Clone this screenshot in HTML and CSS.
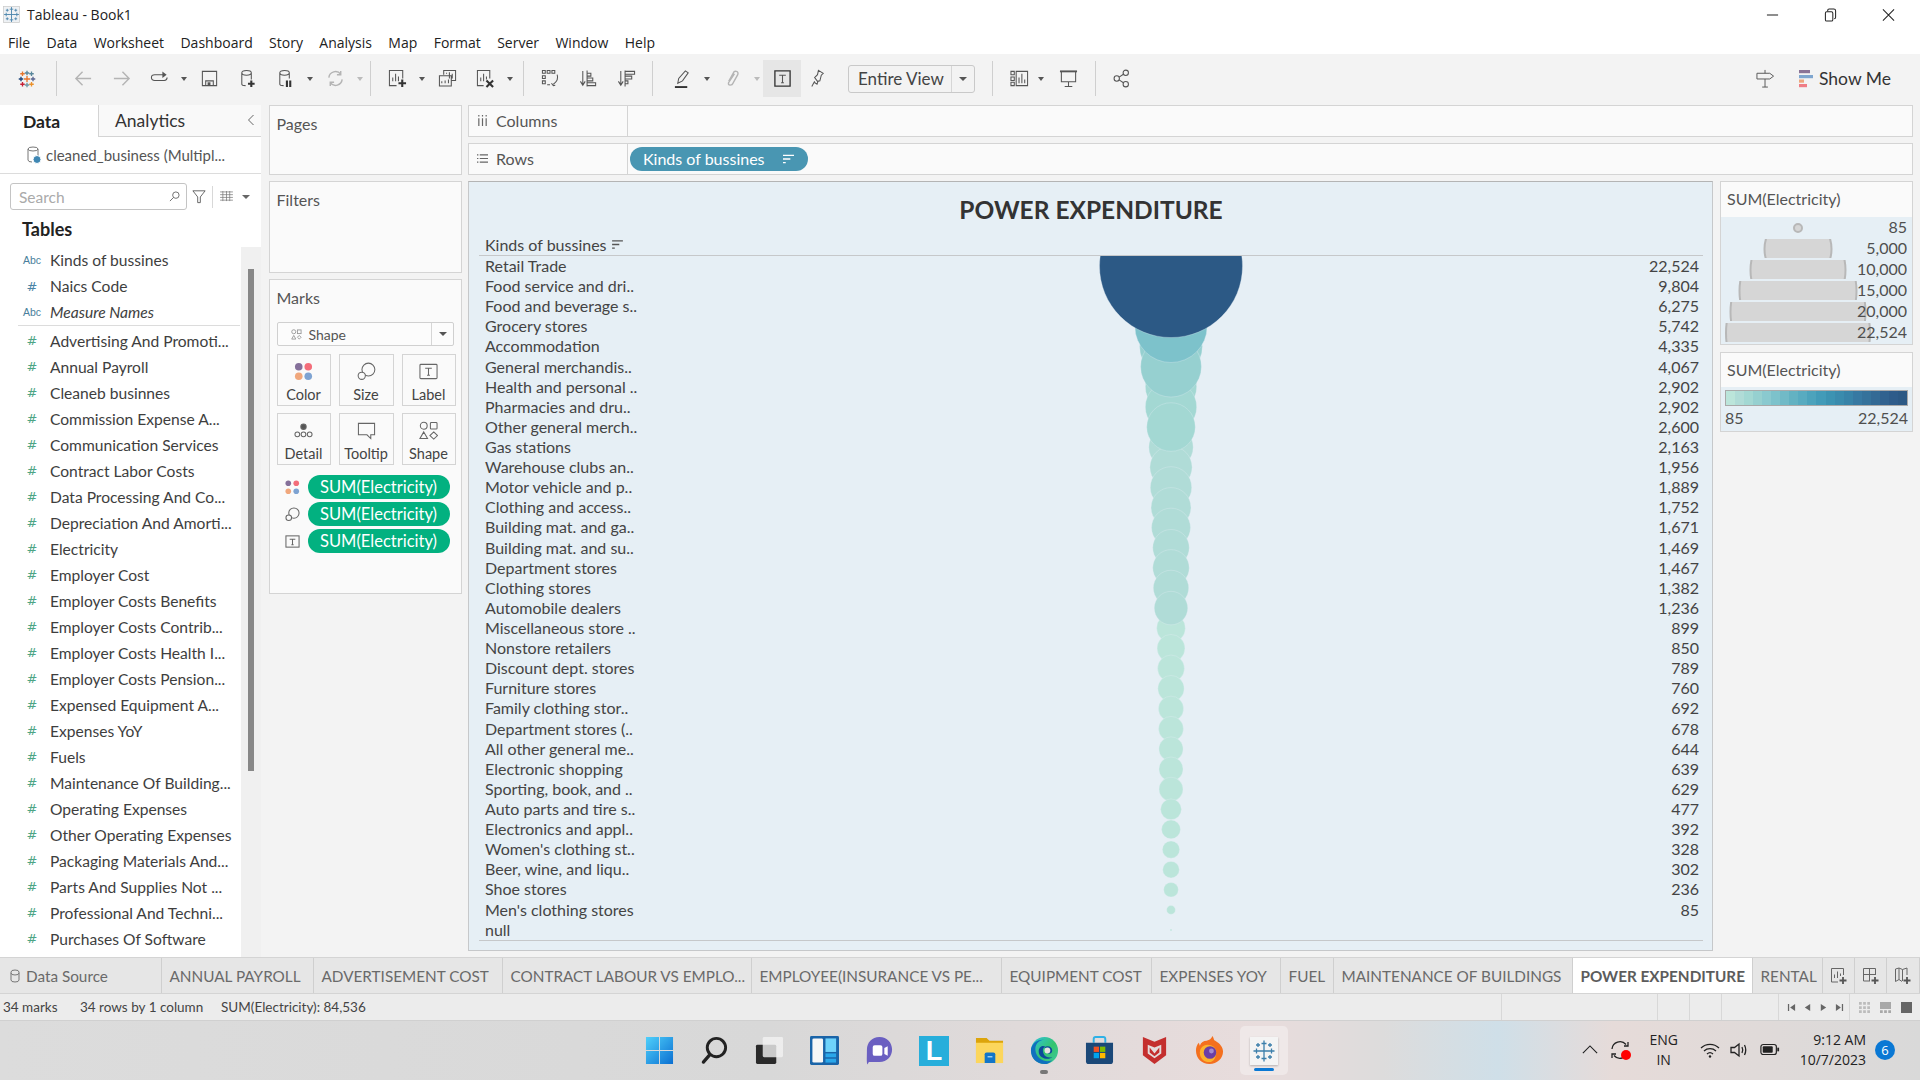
FILE: index.html
```html
<!DOCTYPE html>
<html lang="en">
<head>
    <meta charset="UTF-8">
    <title>Tableau - Book1</title>
    <link rel="stylesheet" href="styles.css">
</head>
<body>
    <svg class="defs" width="0" height="0">
        <symbol id="tab-cross" viewBox="0 0 24 24">
            <path d="M12 7v10M7 12h10M12 1.500v6M9.500 4.500h5M12 16.500v6M9.500 19.500h5M1.500 12h6M4.500 9.500v5M16.500 12h6M19.500 9.500v5M6 4v4M4 6h4M18 4v4M16 6h4M6 16v4M4 18h4M18 16v4M16 18h4"/>
        </symbol>
    </svg>

    <div class="titlebar">
        <div class="app-title">
            <svg class="app-icon" viewBox="0 0 24 24"><rect x="0.500" y="0.500" width="23" height="23" fill="#eef1f4" stroke="#c9c9c9"/><use href="#tab-cross" fill="none" stroke="#4c86ad" stroke-width="1.300"/></svg>
            <span>Tableau - Book1</span>
        </div>
        <div class="win-controls">
            <svg viewBox="0 0 14 14"><path d="M1 7h12"/></svg>
            <svg viewBox="0 0 14 14"><rect x="1.500" y="3.500" width="8" height="10" rx="1.500"/><path d="M4 3V2q0-1.500 1.500-1.500h5q2 0 2 2v7q0 1.500-1.500 1.500"/></svg>
            <svg viewBox="0 0 14 14"><path d="M1 1l12 12M13 1L1 13"/></svg>
        </div>
    </div>

    <div class="menubar">
        <span>File</span><span>Data</span><span>Worksheet</span><span>Dashboard</span><span>Story</span><span>Analysis</span><span>Map</span><span>Format</span><span>Server</span><span>Window</span><span>Help</span>
    </div>

    <div class="toolbar">
        <div class="tb-btn tb-logo"><svg viewBox="0 0 24 24" class="logo-mark">
            <path stroke="#e8762b" d="M6 2v6M3 5h6"/><path stroke="#5b879b" d="M12 1v6M9 4h6"/><path stroke="#59879b" d="M18 2v6M15 5h6"/><path stroke="#1f447a" d="M1 12h6M4 9v6"/><path stroke="#e8762b" d="M12 8v8M8 12h8"/><path stroke="#5b6591" d="M17 12h6M20 9v6"/><path stroke="#c72035" d="M6 16v6M3 19h6"/><path stroke="#7099a6" d="M12 17v6M9 20h6"/><path stroke="#eb912b" d="M18 16v6M15 19h6"/>
        </svg></div>
        <i class="tb-div"></i>
        <div class="tb-group">
            <div class="tb-btn off"><svg viewBox="0 0 20 20"><path d="M18 10H3M9 3l-7 7 7 7"/></svg></div>
            <div class="tb-btn off"><svg viewBox="0 0 20 20"><path d="M2 10h15M11 3l7 7-7 7"/></svg></div>
            <div class="tb-btn"><svg viewBox="0 0 20 20"><path d="M16 6H5q-3.500 0-3.500 3t3.500 3h10q3 0 3-3"/><path class="solid" d="M13 2.500l4.500 3.500-4.500 3.500z"/></svg></div><i class="tb-arrow"></i>
            <div class="tb-btn"><svg viewBox="0 0 20 20"><path d="M2.500 2.500h15v15h-15zM6 17.500v-5h8v5"/><path class="solid" d="M8 14h3v3H8z"/></svg></div>
            <div class="tb-btn"><svg viewBox="0 0 20 20"><path d="M4 4q0-2.500 5-2.500T14 4v7M4 4v12q0 1.500 4 1.500M4 4q0 2.500 5 2.500T14 4"/><path class="bold" d="M14 12v7M10.500 15.500h7"/></svg></div>
            <div class="tb-btn"><svg viewBox="0 0 20 20"><path d="M4 4q0-2.500 5-2.500T14 4v6M4 4v12q0 1.500 4 1.500M4 4q0 2.500 5 2.500T14 4"/><path class="bold" d="M11.500 12v7M15 12v7"/></svg></div><i class="tb-arrow"></i>
            <div class="tb-btn off"><svg viewBox="0 0 20 20"><path d="M3 9a7 7 0 0 1 12.500-3.500M17 11a7 7 0 0 1-12.500 3.500M15.500 2v4h-4M4.500 18v-4h4"/></svg></div><i class="tb-arrow off pull"></i>
        </div>
        <i class="tb-div"></i>
        <div class="tb-group">
            <div class="tb-btn"><svg viewBox="0 0 20 20"><path d="M9 17.500H1.500v-16h14V10M5 13V9M8 13V5M11 13V8"/><path class="bold" d="M15 11v8M11 15h8"/></svg></div><i class="tb-arrow"></i>
            <div class="tb-btn"><svg viewBox="0 0 20 20"><path d="M6 6V1.500h12.500V12H14M1.500 7H14v11H1.500zM9 5V4M12 10V3.500M15 10V5M4 15v-2M7.500 15v-3M11 15v-4"/></svg></div>
            <div class="tb-btn"><svg viewBox="0 0 20 20"><path d="M8 17.500H1.500v-16h13V10M5 13V9M8 13V5M11 11V8"/><path class="bold" d="M11 12l7 7M18 12l-7 7"/></svg></div><i class="tb-arrow"></i>
        </div>
        <i class="tb-div"></i>
        <div class="tb-group">
            <div class="tb-btn"><svg viewBox="0 0 20 20"><path d="M1.500 1.500h3v3h-3zM6.500 1.500h3v3h-3zM11.500 1.500h3v3h-3zM1.500 7h3v3h-3zM1.500 12.500h3v3h-3zM6.500 16.500h3M17 6q2 6-4 10M11 15l2 2.500 2-.5"/></svg></div>
            <div class="tb-btn"><svg viewBox="0 0 20 20"><path d="M4 2v14M1.500 13L4 17l2.500-4M8.500 1.500v17M8.500 4.500h4v3h-4zM8.500 9.500h6v3h-6zM8.500 14.500h9v3h-9z"/></svg></div>
            <div class="tb-btn"><svg viewBox="0 0 20 20"><path d="M4 2v14M1.500 13L4 17l2.500-4M8.500 1.500v17M8.500 2.500h10v3h-10zM8.500 7.500h7v3h-7zM8.500 12.500h3v3h-3z"/></svg></div>
        </div>
        <i class="tb-div"></i>
        <div class="tb-group push">
            <div class="tb-btn"><svg viewBox="0 0 20 20"><path d="M5 15l1-5 7-8 3 2-6 8.500zM5 15l5-2.500"/><path class="bold thick" d="M2 19h13"/></svg></div><i class="tb-arrow"></i>
            <div class="tb-btn off"><svg viewBox="0 0 20 20"><path d="M12 5l-6 9q-1 3 1.500 3t3-2l5-9q1-3-1.500-3.500t-3 1.500l-5 9"/></svg></div><i class="tb-arrow off"></i>
            <div class="tb-btn active"><svg viewBox="0 0 20 20"><path class="box" d="M2 2h16v16H2z"/><path d="M6.500 6.500h7M10 6.500v8M8.500 14.500h3"/></svg></div>
            <div class="tb-btn pin"><svg viewBox="0 0 20 20"><path d="M11 1.500l5 3-2 2-1.500 6-2.500.5-3-4 3-3zM7 13l-3 5.500M10.500 13l-1 3-3-2"/></svg></div>
        </div>
        <div class="view-select"><span>Entire View</span><b></b></div>
        <i class="tb-div"></i>
        <div class="tb-group">
            <div class="tb-btn"><svg viewBox="0 0 20 20"><path d="M1 2.500h3.500v3.500H1zM1 8.500h3.500v3.500H1zM1 14h3.500v3.500H1zM6.500 2.500h12v15h-12zM9.500 15V9M12.500 15V5M15.500 15v-4"/></svg></div><i class="tb-arrow tight"></i>
            <div class="tb-btn"><svg viewBox="0 0 20 20"><path class="thick" d="M1 2.500h18"/><path d="M2.500 3v10.500h15V3M10 13.500v5M6 18.500h8"/></svg></div>
        </div>
        <i class="tb-div"></i>
        <div class="tb-btn"><svg viewBox="0 0 20 20"><circle cx="14.500" cy="4" r="2.800"/><circle cx="14.500" cy="16" r="2.800"/><circle cx="5" cy="10" r="2.800"/><path d="M7.500 8.500l4.500-3M7.500 11.500l4.500 3"/></svg></div>
        <div class="tb-right">
            <svg class="sign" viewBox="0 0 20 20"><path d="M1 4.500h13.500l4 3-4 3H1zM9.500 1v3.500M9.500 10.500V19M6.500 19h6"/></svg>
            <div class="show-me">
                <svg viewBox="0 0 14 18"><rect width="11" height="3.200" fill="#8a7396"/><rect y="5" width="14" height="3.200" fill="#7fa6cf"/><rect y="9.500" width="5" height="3.200" fill="#eda67c"/><rect y="14" width="8" height="3.200" fill="#ef7d85"/></svg>
                <span>Show Me</span>
            </div>
        </div>
    </div>

    <div class="workspace">
        <div class="data-pane">
            <div class="pane-tabs">
                <div class="pane-tab current">Data</div>
                <div class="pane-tab">Analytics<svg class="collapse" viewBox="0 0 8 12"><path d="M6.500 1L1.500 6l5 5"/></svg></div>
            </div>
            <div class="source">
                <svg viewBox="0 0 14 18"><path d="M1 3q0-2 5-2t5 2v7M1 3v11q0 2 4 2M1 3q0 2 5 2t5-2"/><circle class="tick" cx="10" cy="13.500" r="4"/></svg>
                <span>cleaned_business (Multipl...</span>
            </div>
            <div class="search-row">
                <div class="search"><span>Search</span><svg viewBox="0 0 12 12"><circle cx="7.500" cy="4.500" r="3.500"/><path d="M5 7l-4 4"/></svg></div>
                <svg class="funnel" viewBox="0 0 16 16"><path d="M1 1.500h14L9.500 8.500v6.500h-3V8.500z"/></svg>
                <i class="search-div"></i>
                <svg class="list-ico" viewBox="0 0 14 12"><path d="M0 1h14M0 4h14M0 7h14M0 10h14M3 0v11M7 0v11M10.500 0v11"/></svg>
                <i class="caret"></i>
            </div>
            <div class="tables-title">Tables</div>
            <div class="field-wrap">
                <div class="fields">
                    <div class="field"><em class="abc">Abc</em><span>Kinds of bussines</span></div>
                    <div class="field"><em class="dim">#</em><span>Naics Code</span></div>
                    <div class="field names"><em class="abc">Abc</em><span>Measure Names</span></div>
                    <div class="field-sep"></div>
                    <div class="field"><em>#</em><span>Advertising And Promoti...</span></div>
                    <div class="field"><em>#</em><span>Annual Payroll</span></div>
                    <div class="field"><em>#</em><span>Cleaneb businnes</span></div>
                    <div class="field"><em>#</em><span>Commission Expense A...</span></div>
                    <div class="field"><em>#</em><span>Communication Services</span></div>
                    <div class="field"><em>#</em><span>Contract Labor Costs</span></div>
                    <div class="field"><em>#</em><span>Data Processing And Co...</span></div>
                    <div class="field"><em>#</em><span>Depreciation And Amorti...</span></div>
                    <div class="field"><em>#</em><span>Electricity</span></div>
                    <div class="field"><em>#</em><span>Employer Cost</span></div>
                    <div class="field"><em>#</em><span>Employer Costs Benefits</span></div>
                    <div class="field"><em>#</em><span>Employer Costs Contrib...</span></div>
                    <div class="field"><em>#</em><span>Employer Costs Health I...</span></div>
                    <div class="field"><em>#</em><span>Employer Costs Pension...</span></div>
                    <div class="field"><em>#</em><span>Expensed Equipment A...</span></div>
                    <div class="field"><em>#</em><span>Expenses YoY</span></div>
                    <div class="field"><em>#</em><span>Fuels</span></div>
                    <div class="field"><em>#</em><span>Maintenance Of Building...</span></div>
                    <div class="field"><em>#</em><span>Operating Expenses</span></div>
                    <div class="field"><em>#</em><span>Other Operating Expenses</span></div>
                    <div class="field"><em>#</em><span>Packaging Materials And...</span></div>
                    <div class="field"><em>#</em><span>Parts And Supplies Not ...</span></div>
                    <div class="field"><em>#</em><span>Professional And Techni...</span></div>
                    <div class="field"><em>#</em><span>Purchases Of Software</span></div>
                </div>
                <div class="scroll-track"><div class="scroll-thumb"></div></div>
            </div>
        </div>

        <div class="cards">
            <div class="card pages">Pages</div>
            <div class="card filters">Filters</div>
            <div class="card marks">
                <div>Marks</div>
                <div class="mark-select">
                    <svg viewBox="0 0 12 12"><circle cx="3" cy="3" r="2.200"/><rect x="7" y="1" width="4" height="4"/><path d="M3 7l2.200 4H.8zM9 7l2 2-2 2-2-2z"/></svg>
                    <span>Shape</span><b></b>
                </div>
                <div class="mark-grid">
                    <div class="mark-btn">
                        <svg viewBox="0 0 20 20"><circle cx="5" cy="5" r="4" fill="#85709a"/><circle cx="15" cy="5" r="4" fill="#f36d7a"/><circle cx="5" cy="15" r="4" fill="#f0a77c"/><circle cx="15" cy="15" r="4" fill="#7ea3d2"/></svg>
                        <span>Color</span>
                    </div>
                    <div class="mark-btn">
                        <svg class="ln" viewBox="0 0 20 20"><circle cx="12" cy="8" r="6.800"/><circle cx="5" cy="14.500" r="3.800" fill="#fafafa"/></svg>
                        <span>Size</span>
                    </div>
                    <div class="mark-btn">
                        <svg class="ln" viewBox="0 0 20 20"><rect x="1" y="2.500" width="18" height="15" rx="1"/><path d="M6.500 6.500h7M10 6.500v7.500M8.500 14h3"/></svg>
                        <span>Label</span>
                    </div>
                    <div class="mark-btn">
                        <svg class="ln" viewBox="0 0 20 20"><circle cx="10" cy="6" r="2.800" fill="#555"/><circle cx="3.500" cy="14" r="2.500"/><circle cx="10" cy="14" r="2.500"/><circle cx="16.500" cy="14" r="2.500"/></svg>
                        <span>Detail</span>
                    </div>
                    <div class="mark-btn">
                        <svg class="ln" viewBox="0 0 20 20"><path d="M1.500 2.500h17v12h-4v4l-4-4h-9z"/></svg>
                        <span>Tooltip</span>
                    </div>
                    <div class="mark-btn">
                        <svg class="ln" viewBox="0 0 20 20"><circle cx="5" cy="5" r="3.600"/><rect x="12" y="1.500" width="7" height="7" rx="1"/><path d="M5 11.500l4 7H1zM15.500 11.500l4 3.800-4 3.800-4-3.800z"/></svg>
                        <span>Shape</span>
                    </div>
                </div>
                <div class="pill-row">
                    <svg viewBox="0 0 16 16"><circle cx="3.500" cy="3.500" r="3" fill="#85709a"/><circle cx="12" cy="3.500" r="3" fill="#f36d7a"/><circle cx="3.500" cy="12" r="3" fill="#f0a77c"/><circle cx="12" cy="12" r="3" fill="#7ea3d2"/></svg>
                    <div class="pill">SUM(Electricity)</div>
                </div>
                <div class="pill-row">
                    <svg class="ln" viewBox="0 0 16 16"><circle cx="9.500" cy="6.500" r="5.500"/><circle cx="4" cy="11.500" r="3" fill="#fafafa"/></svg>
                    <div class="pill">SUM(Electricity)</div>
                </div>
                <div class="pill-row">
                    <svg class="ln" viewBox="0 0 16 16"><rect x="1" y="2" width="14" height="12"/><path d="M5 5.500h6M8 5.500v6M6.800 11.500h2.400"/></svg>
                    <div class="pill">SUM(Electricity)</div>
                </div>
            </div>
        </div>

        <div class="main-col">
            <div class="shelf">
                <div class="shelf-label"><svg viewBox="0 0 12 12"><path d="M2 0v1.500M6 0v1.500M10 0v1.500M2 3.500V12M6 3.500V12M10 3.500V12"/></svg>Columns</div>
            </div>
            <div class="shelf">
                <div class="shelf-label"><svg viewBox="0 0 12 12"><path d="M0 2h1.500M3 2h9M0 6h1.500M3 6h9M0 10h1.500M3 10h9"/></svg>Rows</div>
                <div class="row-pill"><span>Kinds of bussines</span><svg viewBox="0 0 12 10"><path d="M0 1h12M0 5h8M0 9h3"/></svg></div>
            </div>
            <div class="view-row">
                <div class="viz">
                    <div class="viz-title">POWER EXPENDITURE</div>
                    <div class="viz-head">Kinds of bussines<svg viewBox="0 0 12 10"><path d="M0 1h12M0 5h8M0 9h3"/></svg></div>
                    <div class="viz-rows" id="viz-rows"><svg class="bubbles" id="bubbles"></svg></div>
                </div>
                <div class="legends">
                    <div class="legend">
                        <div class="legend-title">SUM(Electricity)</div>
                        <div class="size-body">
                            <div class="size-row"><i class="size-mark" style="width:10px;height:10px"></i><span>85</span></div>
                            <div class="size-row"><i class="size-mark" style="width:69px;height:69px"></i><span>5,000</span></div>
                            <div class="size-row"><i class="size-mark" style="width:97px;height:97px"></i><span>10,000</span></div>
                            <div class="size-row"><i class="size-mark" style="width:119px;height:119px"></i><span>15,000</span></div>
                            <div class="size-row"><i class="size-mark" style="width:137px;height:137px"></i><span>20,000</span></div>
                            <div class="size-row"><i class="size-mark" style="width:146px;height:146px"></i><span>22,524</span></div>
                        </div>
                    </div>
                    <div class="legend">
                        <div class="legend-title">SUM(Electricity)</div>
                        <div class="ramp-body">
                            <div class="ramp" id="ramp"></div>
                            <div class="ramp-labels"><span>85</span><span>22,524</span></div>
                        </div>
                    </div>
                </div>
            </div>
        </div>
    </div>

    <div class="tabs">
        <div class="tab source-tab"><svg viewBox="0 0 10 14"><path d="M1 3q0-2 4-2t4 2v8q0 2-4 2t-4-2zM1 4q0 2 4 2t4-2"/></svg>Data Source</div>
        <div class="tab">ANNUAL PAYROLL</div>
        <div class="tab">ADVERTISEMENT COST</div>
        <div class="tab">CONTRACT LABOUR VS EMPLO...</div>
        <div class="tab">EMPLOYEE(INSURANCE VS PE...</div>
        <div class="tab">EQUIPMENT COST</div>
        <div class="tab">EXPENSES YOY</div>
        <div class="tab">FUEL</div>
        <div class="tab">MAINTENANCE OF BUILDINGS</div>
        <div class="tab on">POWER EXPENDITURE</div>
        <div class="tab">RENTAL</div>
        <div class="tab add"><svg viewBox="0 0 18 18"><path d="M8 15H1.500V1.500h12V8M4.500 11V7.500M7.500 11V4.500M10.500 9V6.500"/><path class="bold" d="M13 10v7M9.500 13.500h7"/></svg></div>
        <div class="tab add"><svg viewBox="0 0 18 18"><path d="M8 14H1.500V1.500h12V8M1.500 7.500h12M7.500 1.500V14"/><path class="bold" d="M13 10v7M9.500 13.500h7"/></svg></div>
        <div class="tab add"><svg viewBox="0 0 18 18"><path d="M8 14.500l-3-2-3.500 2V2L5 1l3.500 1.500L13 1v7M5 1v11.500M8.500 2.500V14"/><path class="bold" d="M13 10v7M9.500 13.500h7"/></svg></div>
    </div>

    <div class="statusbar">
        <span class="st-marks">34 marks</span>
        <span class="st-rows">34 rows by 1 column</span>
        <span>SUM(Electricity): 84,536</span>
        <div class="st-cells">
            <i class="c1"></i><i class="c2"></i><i class="c3"></i><i class="c4"></i>
            <div class="st-nav">
                <svg viewBox="0 0 10 10"><path d="M1 1h1.400v8H1zM9 1v8L3.500 5z"/></svg>
                <svg viewBox="0 0 10 10"><path d="M8 1v8L2 5z"/></svg>
                <svg viewBox="0 0 10 10"><path d="M2 1v8l6-4z"/></svg>
                <svg viewBox="0 0 10 10"><path d="M1 1v8l5.500-4zM7.600 1H9v8H7.600z"/></svg>
            </div>
            <div class="st-layout">
                <svg viewBox="0 0 12 12" fill="#bcbcbc"><path d="M0 0h3v3H0zM4.500 0h3v3h-3zM9 0h3v3H9zM0 4.500h3v3H0zM4.500 4.500h3v3h-3zM9 4.500h3v3H9zM0 9h3v3H0zM4.500 9h3v3h-3zM9 9h3v3H9z"/></svg>
                <svg viewBox="0 0 12 12" fill="#a8a8a8"><path d="M0 0h12v7.500H0zM0 9h3v3H0zM4.500 9h3v3h-3zM9 9h3v3H9z"/></svg>
                <svg viewBox="0 0 12 12" fill="#666"><path d="M0 0h12v12H0z"/></svg>
            </div>
        </div>
    </div>

    <div class="taskbar">
        <div class="task-apps">
            <div class="task-app"><svg viewBox="0 0 30 30"><defs><linearGradient id="win" x1="0" y1="0" x2="1" y2="1"><stop offset="0" stop-color="#4fd0fb"/><stop offset="1" stop-color="#0b6fd1"/></linearGradient></defs><path fill="url(#win)" d="M1 1h13.500v13.500H1zM15.500 1H29v13.500H15.500zM1 15.500h13.500V29H1zM15.500 15.500H29V29H15.500z"/></svg></div>
            <div class="task-app"><svg viewBox="0 0 30 30"><circle cx="17" cy="12" r="9.500" fill="none" stroke="#222" stroke-width="3"/><path d="M10 19.500L3.500 27" stroke="#222" stroke-width="3.400" stroke-linecap="round"/></svg></div>
            <div class="task-app"><svg viewBox="0 0 30 30"><rect x="1" y="9" width="21" height="20" rx="1.500" fill="#2a2a2a"/><rect x="8" y="1" width="21" height="21" rx="1.500" fill="#f2f2f2" fill-opacity=".8"/></svg></div>
            <div class="task-app"><svg viewBox="0 0 30 30"><rect width="30" height="30" rx="1.500" fill="#1a64a8"/><rect x="2.500" y="2.500" width="11" height="25" rx="1.500" fill="#f6f6f6"/><rect x="16" y="2.500" width="11" height="14" fill="#6fd3fb"/><rect x="16" y="18" width="11" height="4" fill="#2aa7ea"/><rect x="16" y="23.500" width="11" height="4" fill="#2aa7ea"/></svg></div>
            <div class="task-app"><svg viewBox="0 0 30 30"><path d="M15 1c8 0 13 6 13 13s-5 13-13 13H4l-1.500 2.500C1.500 27 2 22 2 14 2 7 7 1 15 1z" fill="#6a5fc1"/><rect x="8" y="9.500" width="10" height="11" rx="2" fill="#fff"/><path d="M20 12.500l3.500-2v10l-3.500-2z" fill="#fff"/></svg></div>
            <div class="task-app"><div class="l-tile">L</div></div>
            <div class="task-app"><svg viewBox="0 0 30 30"><path d="M1 2h11l3 3h14v23H1z" fill="#dca40b"/><path d="M1 7h28v21H1z" fill="#fcd65c"/><path d="M10 19q0-2 2-2h7q2 0 2 2v9H10z" fill="#1276c9"/><path d="M13 21.500h5" stroke="#bfe3f7" stroke-width="1.200"/></svg></div>
            <div class="task-app dot"><svg viewBox="0 0 30 30"><defs><linearGradient id="edge" x1="0" y1="0" x2="1" y2="1"><stop offset="0" stop-color="#2fc2e2"/><stop offset=".55" stop-color="#35c46e"/><stop offset="1" stop-color="#3ec8a0"/></linearGradient></defs><circle cx="15" cy="15" r="14" fill="url(#edge)"/><path d="M1 15C1 8 8 3 15 4c-6 0-11 5-9 13 2 7 10 11 17 8-3 3-5 4-8 4C7 29 1 23 1 15z" fill="#1070bf"/><path d="M15 12c3-3 8-1 8 3 0 3-3 4-5 3 2-2 0-5-3-6zM9 16c0-4 3-7 7-5-3 1-3 4-2 7 1 3 5 5 9 4-3 3-14 2-14-6z" fill="#0b4a9a"/><circle cx="18" cy="15" r="3" fill="#e6e0e0"/></svg></div>
            <div class="task-app"><svg viewBox="0 0 30 30"><path d="M9 7V3q0-2 2-2h8q2 0 2 2v4" fill="none" stroke="#2fb1e6" stroke-width="2"/><path d="M1 7h28v19q0 3-3 3H4q-3 0-3-3z" fill="#1b4878"/><rect x="9" y="11" width="5.500" height="5.500" fill="#f25022"/><rect x="15.500" y="11" width="5.500" height="5.500" fill="#7fba00"/><rect x="9" y="17.500" width="5.500" height="5.500" fill="#00a4ef"/><rect x="15.500" y="17.500" width="5.500" height="5.500" fill="#ffb900"/></svg></div>
            <div class="task-app"><svg viewBox="0 0 30 30"><path d="M3 1l12 5 12-5v19l-12 9-12-9z" fill="#c42f2e"/><path d="M8 9l7 3 7-3v9l-7 5-7-5z" fill="#e4dcdc"/><path d="M10 12l5 6 5-6v5l-5 4-5-4z" fill="#c42f2e"/></svg></div>
            <div class="task-app"><svg viewBox="0 0 30 30"><path d="M15 29C7 29 1 23 1 15c0-3 1-6 3-8l1 3c1-3 4-5 7-5 3-1 5-2 6-5 2 3 1 4 3 5 5 3 8 7 8 11 0 7-6 13-14 13z" fill="#f4701f"/><path d="M15 27C9 27 5 23 5 17c0-5 4-8 8-8 5 0 9 3 9 8s-3 10-7 10z" fill="#fbb32d"/><circle cx="15.500" cy="17" r="6.500" fill="#6b3fa6"/><circle cx="17" cy="15.500" r="2.500" fill="#a38bd1"/></svg></div>
            <div class="task-app current"><div class="tile"><svg viewBox="0 0 24 24"><use href="#tab-cross" fill="none" stroke="#3c7fab" stroke-width="1.300"/></svg></div></div>
        </div>
        <div class="tray">
            <svg class="t-chev" viewBox="0 0 18 10"><path d="M1 9l8-8 8 8"/></svg>
            <div class="t-sync">
                <svg viewBox="0 0 20 20"><path d="M2 9a8 8 0 0 1 14-4.500M18 2v4h-4M18 11a8 8 0 0 1-14 4.500M2 18v-4h4"/></svg>
                <i></i>
            </div>
            <div class="t-lang"><div>ENG</div><div>IN</div></div>
            <svg class="t-wifi" viewBox="0 0 20 16"><path d="M1 6a13 13 0 0 1 18 0M4 9a9 9 0 0 1 12 0M7 12a4.500 4.500 0 0 1 6 0"/><circle class="solid" cx="10" cy="14.500" r="1.200"/></svg>
            <svg class="t-vol" viewBox="0 0 20 16"><path d="M1 5.500h3.500L9 2v12l-4.500-3.500H1zM12 5q1.500 3 0 6M14.500 3q2.500 5 0 10"/></svg>
            <svg class="t-batt" viewBox="0 0 22 14"><rect x="1" y="1.500" width="17" height="11" rx="2.500"/><rect class="solid" x="3" y="3.500" width="11" height="7" rx="1"/><path class="solid" d="M19 5h2v4h-2z"/></svg>
            <div class="t-clock"><div>9:12 AM</div><div>10/7/2023</div></div>
            <div class="t-badge">6</div>
        </div>
    </div>

    <script src="chart.js"></script>
</body>
</html>
```

FILE: styles.css
```css
:root {
    --panel: #fafafa;
    --chrome: #f3f3f3;
    --line: #d4d4d4;
    --viz: #e6eff5;
    --text: #4f4f4f;
}

* {
    box-sizing: border-box;
}

body {
    margin: 0;
    width: 1920px;
    height: 1080px;
    overflow: hidden;
    font-family: Lato, "Liberation Sans", sans-serif;
    font-size: 16px;
    color: var(--text);
    background: var(--chrome);
    display: flex;
    flex-direction: column;
}

i, em {
    font-style: normal;
}

.defs {
    position: absolute;
}

/* window chrome */
.titlebar {
    height: 26px;
    flex: none;
    background: white;
    display: flex;
    justify-content: space-between;
    align-items: center;
    padding: 3px 0 0 3px;
    font-family: "Open Sans", sans-serif;
    font-size: 14px;
    color: #222;
}

.app-title {
    display: flex;
    align-items: center;
    gap: 7px;
}

.app-icon {
    width: 17px;
    height: 17px;
}

.win-controls {
    display: flex;
    gap: 45px;
    padding-right: 25px;
}

.win-controls svg {
    width: 13px;
    height: 14px;
    fill: none;
    stroke: #222;
    stroke-width: 1.100;
}

.menubar {
    height: 28px;
    flex: none;
    background: white;
    display: flex;
    align-items: center;
    gap: 16.400px;
    padding: 4px 0 0 8px;
    font-family: "Open Sans", sans-serif;
    font-size: 14px;
    color: #222;
}

/* toolbar */
.toolbar {
    height: 51px;
    flex: none;
    background: var(--chrome);
    display: flex;
    align-items: center;
    padding-left: 8px;
    padding-bottom: 2px;
}

.tb-group {
    display: flex;
    align-items: center;
}

.tb-group.push {
    margin-left: 3px;
}

.tb-btn {
    width: 38px;
    height: 37px;
    display: flex;
    align-items: center;
    justify-content: center;
}

.tb-btn.pin {
    margin-left: -3px;
}

.tb-btn svg {
    width: 19px;
    height: 19px;
    fill: none;
    stroke: #555;
    stroke-width: 1.100;
}

.tb-btn.off svg {
    stroke: #b4b4b4;
    stroke-width: 1.500;
}

.tb-btn.active {
    background: #e6e6e6;
}

.tb-btn .solid {
    fill: #555;
    stroke: none;
}

.tb-btn .bold {
    stroke: #333;
    stroke-width: 2.200;
}

.tb-btn .thick {
    stroke-width: 2;
}

.tb-btn .box {
    stroke: #333;
    stroke-width: 1.400;
}

.tb-btn .logo-mark {
    width: 18px;
    height: 18px;
    stroke-width: 1.800;
}

.tb-arrow {
    width: 12px;
    display: flex;
    justify-content: center;
}

.tb-arrow::after {
    content: "";
    border: 3.500px solid transparent;
    border-top: 4px solid #555;
    border-bottom: 0;
}

.tb-arrow.off::after {
    border-top-color: #bbb;
}

.tb-arrow.pull {
    margin-right: -3px;
}

.tb-arrow.tight {
    margin-right: 2.500px;
    margin-left: -3px;
}

.tb-div {
    width: 1px;
    height: 35px;
    background: #cfcfcf;
    margin: 0 7px;
}

.tb-logo {
    margin-right: 3px;
}

.view-select {
    width: 127px;
    height: 28px;
    margin: 0 10px 0 12px;
    border: 1px solid #c9c9c9;
    border-radius: 3px;
    display: flex;
    align-items: center;
    justify-content: space-between;
    padding-left: 9px;
    font-size: 17px;
    color: #444;
}

.view-select b {
    width: 23px;
    height: 100%;
    border-left: 1px solid #d6d6d6;
    position: relative;
}

.view-select b::after,
.mark-select b::after {
    content: "";
    position: absolute;
    left: 7px;
    top: 11px;
    border: 4px solid transparent;
    border-top: 4px solid #555;
    border-bottom: 0;
}

.tb-right {
    margin-left: auto;
    display: flex;
    align-items: center;
    gap: 24px;
    padding-right: 29px;
}

.sign {
    width: 19px;
    height: 19px;
    fill: none;
    stroke: #555;
}

.show-me {
    display: flex;
    align-items: center;
    gap: 6px;
    font-size: 17.500px;
    color: #333;
}

.show-me svg {
    width: 14px;
    height: 18px;
}

/* main area */
.workspace {
    height: 852px;
    flex: none;
    display: flex;
}

.data-pane {
    width: 261px;
    flex: none;
    background: white;
    display: flex;
    flex-direction: column;
}

.pane-tabs {
    display: flex;
    height: 32px;
    flex: none;
}

.pane-tab {
    flex: 1;
    display: flex;
    align-items: center;
    padding-left: 16px;
    font-size: 17.500px;
    background: #f9f9f9;
    border-bottom: 1px solid #d4d4d4;
    border-left: 1px solid #d4d4d4;
    color: #333;
    position: relative;
}

.pane-tab.current {
    flex: 0 0 98px;
    padding-left: 23px;
    background: white;
    border: 0;
    font-weight: 700;
    color: #222;
}

.collapse {
    position: absolute;
    right: 6px;
    top: 9px;
    width: 8px;
    height: 12px;
    fill: none;
    stroke: #666;
}

.source {
    height: 37px;
    flex: none;
    border-bottom: 1px solid #dcdcdc;
    display: flex;
    align-items: center;
    gap: 5px;
    padding-left: 27px;
    font-size: 15px;
    color: #555;
}

.source svg {
    width: 14px;
    height: 18px;
    fill: none;
    stroke: #777;
}

.source .tick {
    fill: #3f87b3;
    stroke: white;
}

.search-row {
    display: flex;
    align-items: center;
    height: 45px;
    flex: none;
    padding-left: 10px;
}

.search {
    width: 177px;
    height: 27px;
    border: 1px solid #c4c4c4;
    border-radius: 3px;
    display: flex;
    align-items: center;
    justify-content: space-between;
    padding: 0 6px 0 8px;
    color: #aaa;
    font-size: 15.500px;
}

.search svg {
    width: 11px;
    height: 11px;
    fill: none;
    stroke: #666;
}

.funnel {
    width: 14px;
    height: 15px;
    margin-left: 5px;
    fill: none;
    stroke: #555;
}

.search-div {
    width: 1px;
    height: 22px;
    background: #d8d8d8;
    margin: 0 7px 0 6px;
}

.list-ico {
    width: 13px;
    height: 11px;
    fill: none;
    stroke: #777;
    stroke-width: .8;
}

.caret {
    margin-left: 9px;
    border: 4px solid transparent;
    border-top: 4px solid #666;
    border-bottom: 0;
}

.tables-title {
    height: 28px;
    flex: none;
    line-height: 20px;
    padding-left: 22px;
    font-size: 18px;
    font-weight: 700;
    color: #222;
}

.field-wrap {
    flex: 1;
    display: flex;
    min-height: 0;
    overflow: hidden;
}

.fields {
    width: 241px;
    flex: none;
    padding-left: 18px;
}

.field {
    height: 26px;
    display: flex;
    align-items: center;
    font-size: 15.600px;
    color: #3e3e3e;
    white-space: nowrap;
}

.field em {
    width: 32px;
    flex: none;
    text-align: center;
    padding-right: 4px;
    font-family: "DejaVu Sans", sans-serif;
    font-size: 13px;
    color: #4da585;
}

.field em.dim {
    color: #4a84a6;
}

.field em.abc {
    font-family: "Liberation Sans", sans-serif;
    font-size: 10.500px;
    color: #4a7f9c;
}

.names span {
    font-style: italic;
}

.field-sep {
    height: 0;
    border-top: 1px solid #dcdcdc;
    margin: 0 1px 1.500px 0;
}

.scroll-track {
    flex: 1;
    background: #f0f0f0;
    padding: 22px 7px 0;
}

.scroll-thumb {
    height: 502px;
    background: #888;
}

.cards {
    width: 193px;
    flex: none;
    margin: 0 6.500px 0 7.500px;
    display: flex;
    flex-direction: column;
}

.card {
    flex: none;
    background: var(--panel);
    border: 1px solid var(--line);
    padding: 8px 7px;
    color: #555;
}

.pages {
    height: 70px;
    margin-bottom: 6px;
}

.filters {
    height: 92px;
    margin-bottom: 6px;
}

.marks {
    height: 315px;
}

.mark-select {
    height: 24px;
    margin-top: 15px;
    border: 1px solid #d0d0d0;
    border-radius: 2px;
    background: #fcfcfc;
    display: flex;
    align-items: center;
    padding-left: 13px;
    gap: 7px;
    font-size: 14px;
    position: relative;
}

.mark-select svg {
    width: 11px;
    height: 11px;
    fill: none;
    stroke: #999;
}

.mark-select b {
    position: absolute;
    right: 0;
    top: 0;
    width: 22px;
    height: 22px;
    border-left: 1px solid #d6d6d6;
}

.mark-select b::after {
    left: 7px;
    top: 9px;
}

.mark-grid {
    display: grid;
    grid-template-columns: 54px 55px 54px;
    grid-auto-rows: 52px;
    gap: 7px 8px;
    margin-top: 8px;
}

.mark-btn {
    border: 1px solid var(--line);
    display: flex;
    flex-direction: column;
    align-items: center;
    padding-top: 7px;
    gap: 5px;
    font-size: 14.500px;
    color: #444;
}

.mark-btn svg {
    width: 19px;
    height: 19px;
    flex: none;
}

.ln {
    fill: none;
    stroke: #666;
    stroke-width: 1.100;
}

.pill-row {
    display: flex;
    align-items: center;
    gap: 8px;
    height: 24px;
    margin-top: 3px;
    padding-left: 8px;
}

.mark-grid + .pill-row {
    margin-top: 10px;
}

.pill-row svg {
    width: 15px;
    height: 15px;
    flex: none;
}

.pill {
    width: 142px;
    height: 24px;
    border-radius: 12px;
    background: #02b180;
    color: white;
    font-size: 16.500px;
    text-align: center;
    line-height: 24px;
}

.main-col {
    flex: 1;
    padding-right: 7px;
    display: flex;
    flex-direction: column;
}

.shelf {
    height: 32px;
    flex: none;
    margin-bottom: 6px;
    background: var(--panel);
    border: 1px solid var(--line);
    display: flex;
    align-items: center;
}

.shelf-label {
    width: 159px;
    height: 100%;
    border-right: 1px solid var(--line);
    display: flex;
    align-items: center;
    gap: 8px;
    padding: 0 0 1px 8px;
    color: #555;
}

.shelf-label svg {
    width: 11px;
    height: 11px;
    fill: none;
    stroke: #666;
    stroke-width: 1.300;
}

.row-pill {
    width: 178px;
    height: 24px;
    margin-left: 2px;
    border-radius: 12px;
    background: #4996b2;
    color: white;
    display: flex;
    align-items: center;
    justify-content: space-between;
    padding: 0 14px 1px 13px;
}

.row-pill svg {
    width: 11px;
    height: 10px;
    fill: none;
    stroke: white;
    stroke-width: 1.500;
}

.view-row {
    flex: 1;
    display: flex;
    gap: 7px;
    min-height: 0;
    padding-bottom: 6px;
}

.viz {
    width: 1245px;
    flex: none;
    background: var(--viz);
    border: 1px solid #c6c8ca;
    border-top-color: #b4b4b4;
    display: flex;
    flex-direction: column;
    padding: 0 9px 0 10px;
    color: #444;
}

.viz-title {
    height: 52px;
    flex: none;
    padding-top: 11px;
    text-align: center;
    font-size: 24.500px;
    line-height: 34px;
    font-weight: 700;
    color: #333;
}

.viz-head {
    height: 22px;
    flex: none;
    padding-left: 6px;
    display: flex;
    align-items: center;
    gap: 5px;
    border-bottom: 1px solid #c6c8ca;
}

.viz-head svg {
    width: 11px;
    height: 9px;
    fill: none;
    stroke: #555;
    stroke-width: 1.400;
}

.viz-rows {
    position: relative;
    height: 685px;
    flex: none;
    border-bottom: 1px solid #c6c8ca;
}

.viz-row {
    height: 20.120px;
    line-height: 20.120px;
    padding: 0 4px 0 6px;
    display: flex;
    justify-content: space-between;
}

.bubbles {
    position: absolute;
    left: 0;
    top: 0;
    width: 100%;
    height: 100%;
}

.legends {
    flex: 1;
    display: flex;
    flex-direction: column;
    gap: 7px;
}

.legend {
    flex: none;
    background: var(--panel);
    border: 1px solid var(--line);
}

.legend-title {
    height: 35px;
    padding: 7px 6px;
    color: #555;
}

.legend + .legend .legend-title {
    height: 34px;
}

.size-body {
    background: var(--viz);
    height: 127px;
    padding-right: 5px;
}

.size-row {
    height: 21px;
    position: relative;
    overflow: hidden;
    text-align: right;
    line-height: 19px;
}

.size-row span {
    position: relative;
}

.size-mark {
    position: absolute;
    left: 77px;
    top: 50%;
    transform: translateY(-50%) translateX(-50%);
    border-radius: 50%;
    background: #d6d6d6;
    border: 2px solid #b8b8b8;
    clip-path: inset(calc(50% - 9.500px) -2px);
}

.ramp-body {
    background: var(--viz);
    height: 44px;
    padding: 3px 4px 0;
}

.ramp {
    height: 16px;
    display: flex;
    border: 1px solid #a9a9a9;
}

.ramp i {
    flex: 1;
}

.ramp-labels {
    display: flex;
    justify-content: space-between;
    line-height: 24px;
}

/* sheet tabs */
.tabs {
    height: 37px;
    flex: none;
    display: grid;
    grid-template-columns: 162px 152px 189px 249px 250px 150px 129px 53px 239px 180px 70px 32px 32px 33px;
    background: #e6e6e6;
    border-top: 1px solid #d4d4d4;
    border-bottom: 1px solid #d4d4d4;
}

.tab {
    border-right: 1px solid #cfcfcf;
    display: flex;
    align-items: center;
    padding-left: 7.500px;
    white-space: nowrap;
    overflow: hidden;
    color: #6a6a6a;
    font-size: 15.300px;
}

.source-tab {
    padding-left: 10px;
    gap: 6px;
}

.source-tab svg {
    width: 10px;
    height: 14px;
    fill: none;
    stroke: #777;
}

.tab.on {
    background: white;
    font-weight: 700;
    color: #5c5c5c;
}

.tab.add {
    padding-left: 0;
    justify-content: center;
}

.tab.add svg {
    width: 18px;
    height: 18px;
    fill: none;
    stroke: #666;
}

.tab.add .bold {
    stroke: #555;
    stroke-width: 1.800;
}

.statusbar {
    height: 26px;
    flex: none;
    background: #ececec;
    display: flex;
    align-items: center;
    padding-left: 3px;
    font-size: 13.500px;
    color: #444;
}

.st-marks {
    width: 77px;
}

.st-rows {
    width: 141px;
}

.st-cells {
    margin-left: auto;
    width: 419px;
    height: 100%;
    display: flex;
    border-left: 1px solid #d8d8d8;
}

.st-cells > i {
    width: 32px;
    flex: none;
    border-right: 1px solid #d8d8d8;
}

.st-cells > i.c1 {
    width: 156px;
}

.st-cells > i.c4 {
    width: 57px;
}

.st-nav, .st-layout {
    display: flex;
    align-items: center;
    justify-content: center;
}

.st-nav {
    width: 71px;
    flex: none;
    gap: 7px;
    border-right: 1px solid #d8d8d8;
    padding-left: 2px;
}

.st-nav svg {
    width: 9px;
    height: 9px;
    fill: #666;
}

.st-layout {
    flex: 1;
    gap: 10px;
}

.st-layout svg {
    width: 11px;
    height: 11px;
}

/* windows taskbar */
.taskbar {
    height: 60px;
    flex: none;
    position: relative;
    display: flex;
    background: linear-gradient(90deg, #dcdcdc 0, #d8d8d8 40%, #e8dcdc 66%, #dddcdc 72%, #cfdfe8 78%, #e6dbd9 84%, #d9d9d9 100%);
    border-top: 1px solid #d0d0d0;
}

.task-apps {
    display: flex;
    gap: 7px;
    margin-left: 635px;
}

.task-app {
    width: 48px;
    height: 59px;
    display: flex;
    align-items: center;
    justify-content: center;
    position: relative;
}

.task-app > svg {
    width: 29px;
    height: 29px;
}

.l-tile {
    width: 30px;
    height: 30px;
    background: #27aedb;
    color: white;
    font-family: "Liberation Sans", sans-serif;
    font-weight: 700;
    font-size: 27px;
    line-height: 30px;
    text-align: center;
}

.task-app.dot::after {
    content: "";
    position: absolute;
    left: 20px;
    bottom: 6px;
    width: 8px;
    height: 4px;
    border-radius: 2px;
    background: #777;
}

.task-app.current::after {
    content: "";
    position: absolute;
    left: 14px;
    bottom: 4px;
    width: 20px;
    height: 3px;
    border-radius: 2px;
    background: #0a78d4;
}

.task-app.current {
    background: #efe8e8;
    border-radius: 5px;
    height: 49px;
    margin-top: 5px;
}

.tile {
    width: 28px;
    height: 28px;
    background: #f4f4f4;
    box-shadow: 0 1px 2px rgba(0,0,0,0.25);
    padding: 2px;
}

.tile svg {
    display: block;
}

.tray {
    position: absolute;
    right: 0;
    top: 0;
    height: 100%;
    display: flex;
    align-items: center;
    padding-bottom: 2px;
    font-family: "Open Sans", sans-serif;
    font-size: 14px;
    color: #222;
}

.tray svg {
    fill: none;
    stroke: #222;
    stroke-width: 1.300;
}

.tray .solid {
    fill: #222;
    stroke: none;
}

.t-chev {
    width: 16px;
    height: 9px;
    margin-right: 12px;
}

.t-sync {
    position: relative;
    margin-right: 17px;
}

.t-sync svg {
    width: 20px;
    height: 20px;
    display: block;
}

.t-sync i {
    position: absolute;
    right: -1px;
    bottom: 0;
    width: 10px;
    height: 10px;
    border-radius: 50%;
    background: #f00;
}

.t-lang {
    text-align: center;
    line-height: 20px;
    width: 34px;
    margin-right: 19px;
}

.t-wifi {
    width: 20px;
    height: 16px;
    margin-right: 10px;
}

.t-vol {
    width: 20px;
    height: 16px;
    margin-right: 10px;
}

.t-batt {
    width: 20px;
    height: 13px;
    margin-right: 20px;
}

.t-clock {
    text-align: right;
    line-height: 20px;
    margin-right: 9px;
}

.t-badge {
    width: 20px;
    height: 20px;
    margin-right: 25px;
    border-radius: 50%;
    background: #0a78d4;
    color: white;
    font-size: 13px;
    line-height: 20px;
    text-align: center;
}
```

FILE: chart.js
```js
// rows of the bubble view, in sort order
const rows = [
    ["Retail Trade", 22524], ["Food service and dri..", 9804], ["Food and beverage s..", 6275],
    ["Grocery stores", 5742], ["Accommodation", 4335], ["General merchandis..", 4067],
    ["Health and personal ..", 2902], ["Pharmacies and dru..", 2902], ["Other general merch..", 2600],
    ["Gas stations", 2163], ["Warehouse clubs an..", 1956], ["Motor vehicle and p..", 1889],
    ["Clothing and access..", 1752], ["Building mat. and ga..", 1671], ["Building mat. and su..", 1469],
    ["Department stores", 1467], ["Clothing stores", 1382], ["Automobile dealers", 1236],
    ["Miscellaneous store ..", 899], ["Nonstore retailers", 850], ["Discount dept. stores", 789],
    ["Furniture stores", 760], ["Family clothing stor..", 692], ["Department stores (..", 678],
    ["All other general me..", 644], ["Electronic shopping", 639], ["Sporting, book, and ..", 629],
    ["Auto parts and tire s..", 477], ["Electronics and appl..", 392], ["Women's clothing st..", 328],
    ["Beer, wine, and liqu..", 302], ["Shoe stores", 236], ["Men's clothing stores", 85],
    ["null", null]
];

const palette = [
    "#bbe5da", "#b0dcd7", "#a3d8d3", "#96d0d0", "#8ac9cf", "#7dc2cb", "#71bac7", "#63b2c2", "#58abc0", "#4ca3bc",
    "#429bb8", "#3c93b2", "#3a8bad", "#3883a8", "#3779a2", "#35729b", "#336a95", "#31628f", "#2e5c8a", "#2c5985"
];

const ROW_H = 20.12;
const CENTER_X = 692;
const MAX_D = 143;
const svgNS = "http://www.w3.org/2000/svg";

function stepOf(value) {
    return Math.min(19, Math.floor((value - 85) / ((22524 - 85) / 20)));
}

const holder = document.getElementById("viz-rows");
const bubbles = document.getElementById("bubbles");

rows.forEach(([name, value]) => {
    const row = document.createElement("div");
    row.className = "viz-row";
    row.innerHTML = `<span>${name}</span><span>${value === null ? "" : value.toLocaleString("en-US")}</span>`;
    holder.insertBefore(row, bubbles);
});

// lighter steps are painted first, so darker marks sit on top
rows.map(([name, value], i) => ({ value, i, step: value === null ? 0 : stepOf(value) }))
    .sort((a, b) => a.step - b.step || a.i - b.i)
    .forEach(({ value, i, step }) => {
        const c = document.createElementNS(svgNS, "circle");
        const d = value === null ? 2 : MAX_D * Math.sqrt(value / 22524);
        c.setAttribute("cx", CENTER_X);
        c.setAttribute("cy", (i + 0.5) * ROW_H);
        c.setAttribute("r", d / 2);
        c.setAttribute("fill", palette[step]);
        c.setAttribute("stroke", "rgba(230,239,245,0.3)");
        bubbles.appendChild(c);
    });

const ramp = document.getElementById("ramp");
palette.forEach(color => {
    const cell = document.createElement("i");
    cell.style.background = color;
    ramp.appendChild(cell);
});
```
